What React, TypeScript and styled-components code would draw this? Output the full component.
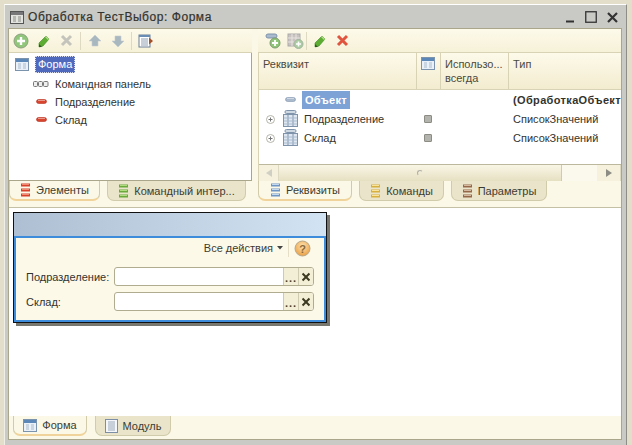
import React from "react";
import styled, { createGlobalStyle } from "styled-components";

const Global = createGlobalStyle`
  html, body { margin: 0; padding: 0; background: #e2dec9; }
  body { width: 632px; height: 445px; overflow: hidden; font-family: "Liberation Sans", Arial, sans-serif; font-size: 11px; color: #3c3c32; }
`;

const Page = styled.div`
  width: 632px; height: 445px; box-sizing: border-box; padding: 4px 5px 0 4px;
`;
const Win = styled.div`
  height: 441px; box-sizing: border-box; display: flex; flex-direction: column;
  background: #c9c9c5; border-top: 1px solid #fff; border-left: 1px solid #efefe8; border-right: 1px solid #8e8e86;
  padding: 0 4px 0 3px;
`;
const Title = styled.div`
  height: 23px; flex: none; display: flex; align-items: center; gap: 4px; padding: 1px 0 0 2px; box-sizing: border-box;
  font-size: 12px; color: #33332e; -webkit-text-stroke: 0.2px #33332e;
`;
const TitleText = styled.span`flex: 1; letter-spacing: 0.55px;`;
const WinButtons = styled.div`display: flex; align-items: center; gap: 10px; margin-right: 4px;`;
const Body = styled.div`
  height: 412px; flex: none; box-sizing: border-box; display: flex; flex-direction: column;
  background: #fbf8e7; border: 1px solid #a9a68c; border-bottom: none;
`;
const Top = styled.div`
  height: 172px; flex: none; display: grid; grid-template-columns: 243px 363px; column-gap: 6px;
`;
const Pane = styled.div`display: flex; flex-direction: column; min-width: 0;`;
const Toolbar = styled.div<{ $pad?: number }>`
  height: 24px; flex: none; box-sizing: border-box; display: flex; align-items: center; padding-left: ${p => p.$pad ?? 0}px;
  background: linear-gradient(#fdfaea, #f6f1d8); border-bottom: 1px solid #d8d3b4;
`;
const ToolBtn = styled.span`width: 23px; height: 18px; display: flex; align-items: center; justify-content: center;`;
const Sep = styled.span<{ $tight?: boolean }>`
  width: 1px; height: 18px; background: #dedac2; margin: ${p => (p.$tight ? "0 1px 0 -1px" : "0 2px")};
`;
const Tree = styled.div`
  flex: 1; background: #fff; border-right: 1px solid #a9a68c; border-bottom: 1px solid #a9a68c; padding-top: 2px; box-sizing: border-box;
`;
const TreeRoot = styled.div`
  height: 18px; display: flex; align-items: center; padding-left: 6px; margin-bottom: 2px; gap: 6px;
`;
const Selected = styled.span`
  height: 17px; line-height: 17px; padding: 0 3px; background: #4f69bd; color: #fff; outline: 1px dotted #d7dcf0; outline-offset: -1px;
`;
const TreeItem = styled.div`
  height: 18px; display: flex; align-items: center; padding-left: 23px; color: #33332e;
`;
const ItemIcon = styled.span`width: 18px; display: flex; align-items: center; justify-content: center; margin-right: 5px;`;
const Table = styled.div`
  flex: 1; display: flex; flex-direction: column; min-height: 0; background: #fff; overflow: hidden;
  border-left: 1px solid #d8d3b4;
`;
const Head = styled.div`
  height: 36px; flex: none; display: grid; grid-template-columns: 158px 24px 68px 1fr;
  background: linear-gradient(#fdfaea, #f3ecd0); border-bottom: 1px solid #d8d3b4; box-sizing: content-box;
`;
const HeadCell = styled.div<{ $last?: boolean }>`
  padding: 4px 0 0 4px; line-height: 14px; color: #4a4a3e; border-right: ${p => (p.$last ? "none" : "1px solid #d8d3b4")};
`;
const Row = styled.div`height: 19px; flex: none; display: grid; grid-template-columns: 158px 24px 68px 1fr; align-items: center; color: #33332e;`;
const NameCell = styled.div`display: flex; align-items: center; padding-left: 7px;`;
const Expand = styled.span<{ $hidden?: boolean }>`
  width: 9px; height: 9px; display: block; margin-right: 6px; visibility: ${p => (p.$hidden ? "hidden" : "visible")};
`;
const RowIcon = styled.span`width: 18px; display: flex; justify-content: center; margin-right: 5px;`;
const SelBold = styled.span`
  background: #7da2d6; color: #fff; font-weight: 700; height: 18px; line-height: 18px; padding: 0 3px; margin-left: -2px; letter-spacing: .3px;
`;
const Check = styled.span`
  display: block; width: 6px; height: 6px; margin-left: 7px; background: #b4b4ae; border: 1px solid #8c8c84; border-radius: 1px;
`;
const TypeCell = styled.div<{ $bold?: boolean }>`
  padding-left: 4px; white-space: nowrap; overflow: hidden; font-weight: ${p => (p.$bold ? 700 : 400)}; letter-spacing: ${p => (p.$bold ? ".35px" : "0")};
`;
const Spacer = styled.div`flex: 1;`;
const Scroll = styled.div`
  height: 17px; flex: none; display: grid; grid-template-columns: 20px 283px 35px 1fr; background: #f5f1dc; border-top: 1px solid #bcb89e; box-sizing: border-box;
`;
const ScrollArrow = styled.div`display: flex; align-items: center; justify-content: center; border-right: 1px solid #dedac2;`;
const Thumb = styled.div`
  background: linear-gradient(#f9f6e6, #e6e0c2); border-right: 1px solid #cfcbb0; display: flex; align-items: center; justify-content: center;
`;
const ThumbMark = styled.span`width: 4px; height: 4px; border: 1px solid #b0b0a8; border-radius: 50%; border-right-color: transparent; border-bottom-color: transparent;`;
const ScrollRest = styled.div`background: #fbf9ee;`;
const Tabs = styled.div`
  height: 20px; flex: none; display: flex; gap: 7px; box-sizing: border-box;
`;
const Tab = styled.div<{ $active?: boolean; $w: number }>`
  width: ${p => p.$w}px; height: 20px; box-sizing: border-box; display: flex; align-items: center; justify-content: center; gap: 5px;
  border-radius: 0 0 7px 7px; border: 1px solid #d0cbaa; border-top: none; color: #3c3c32;
  background: ${p => (p.$active ? "#fbf8e7" : "#e9e4ca")};
  ${p => p.$active && "border-bottom: 2px solid #f0d39a;"}
  white-space: nowrap;
`;
const Rule = styled.div`height: 7px; flex: none; border-bottom: 1px solid #c4c0a6; box-sizing: border-box;`;
const Canvas = styled.div`
  flex: 1; background: #fff; padding: 4px 0 0 4px; min-height: 0;
`;
const Form = styled.div`
  width: 314px; height: 111px; box-sizing: border-box; border: 1px solid #111; box-shadow: 3px 3px 0 #77776f;
  display: flex; flex-direction: column; background: #3d8bdb;
`;
const FormHead = styled.div`
  height: 23px; flex: none; background: linear-gradient(90deg, #aebfd3, #d2e3f3);
`;
const FormBody = styled.div`
  flex: 1; margin: 2px; background: #fcf9e9; display: flex; flex-direction: column; padding-right: 10px;
`;
const FormBar = styled.div`
  height: 20px; display: flex; align-items: center; justify-content: flex-end; margin-bottom: 9px; margin-right: 3px;
`;
const AllActions = styled.span`color: #3c3c32; display: flex; align-items: center; gap: 4px; padding-right: 5px; border-right: 1px solid #e4dfc6; height: 18px;`;
const Help = styled.span`margin-left: 5px; display: flex;`;
const Field = styled.div`height: 19px; display: flex; align-items: center; margin-bottom: 6px;`;
const Label = styled.span`width: 98px; flex: none; padding-left: 10px; box-sizing: border-box; white-space: nowrap; color: #33332e;`;
const Input = styled.div`
  flex: 1; height: 19px; box-sizing: border-box; background: #fff; border: 1px solid #b0ac90; border-radius: 3px;
  display: flex; justify-content: flex-end; overflow: hidden;
`;
const FieldBtn = styled.span`
  width: 15px; box-sizing: border-box; background: #f3eed6; border-left: 1px solid #cfcbb0; display: flex; align-items: flex-end; justify-content: center;
  color: #4a4526; font-weight: 700; font-size: 11px; line-height: 13px; letter-spacing: 1px;
`;
const FieldClear = styled(FieldBtn)`align-items: center;`;
const BottomTabs = styled.div`
  height: 20px; flex: none; display: flex; gap: 8px; padding-left: 4px; box-sizing: border-box;
`;
const Footer = styled.div`height: 3px; flex: none; background: #fbf8e7; border-bottom: 1px solid #a9a68c;`;

const Plus = () => (
  <svg width="16" height="16" viewBox="0 0 16 16"><circle cx="8" cy="8" r="7" fill="#8fc67a" stroke="#8f9f80" /><path d="M8 4v8M4 8h8" stroke="#fff" strokeWidth="2.4" /></svg>
);
const Pencil = () => (
  <svg width="14" height="14" viewBox="0 0 14 14"><path d="M9 2l3 3-6 7-4 1 0-4z" fill="#5cad32" stroke="#3d8a22" strokeWidth=".6" /><path d="M2 13l0-3 3 3z" fill="#2c5a18" /><path d="M9 2l3 3-1 1-3-3z" fill="#b6dc8e" /></svg>
);
const Cross = ({ c, s = 13, w = 3 }: { c: string; s?: number; w?: number }) => (
  <svg width={s} height={s} viewBox="0 0 13 13"><path d="M2 2l9 9M11 2l-9 9" stroke={c} strokeWidth={w} /></svg>
);
const Arrow = ({ up }: { up?: boolean }) => (
  <svg width="14" height="14" viewBox="0 0 14 14"><path d={up ? "M7 1l6 6H10v5H4V7H1z" : "M7 13l6-6H10V2H4v5H1z"} fill="#a9b7bf" stroke="#c6ced2" strokeWidth=".6" /></svg>
);
const ListArrow = () => (
  <svg width="16" height="14" viewBox="0 0 16 14"><rect x="1" y="1" width="11" height="12" fill="#fff" stroke="#6a7f98" /><rect x="1" y="1" width="11" height="2" fill="#6a8db5" /><path d="M3 5h7M3 7h7M3 9h7M3 11h7" stroke="#8f9eb0" /><path d="M11 3.5l4 3.5-4 3.5z" fill="#a4512a" /></svg>
);
const FormIcon = () => (
  <svg width="14" height="13" viewBox="0 0 14 13"><rect x=".5" y=".5" width="13" height="12" fill="#eaf0f7" stroke="#7c93ad" /><rect x="1" y="1" width="12" height="3" fill="#5b87b8" /><path d="M3 6h3M3 8h3M3 10h3M8 6h3M8 8h3M8 10h3" stroke="#a9bacd" /></svg>
);
const TitleIcon = () => (
  <svg width="14" height="13" viewBox="0 0 14 13"><rect x=".5" y=".5" width="13" height="12" fill="#e2e2de" stroke="#555" /><rect x="1" y="1" width="12" height="3" fill="#77777a" /><path d="M3 6h3M3 8h3M3 10h3M8 6h3M8 8h3M8 10h3" stroke="#8a8a88" /></svg>
);
const Module = () => (
  <svg width="13" height="14" viewBox="0 0 13 14"><rect x=".5" y=".5" width="12" height="13" fill="#f4f6f9" stroke="#7c8ea6" /><path d="M3 3h7M3 5h7M3 7h7M3 9h7M3 11h7" stroke="#9aa8ba" /></svg>
);
const Minus = ({ c = "#d8442e" }: { c?: string }) => (
  <svg width="11" height="6" viewBox="0 0 11 6"><rect x=".5" y=".5" width="10" height="4" rx="2" fill={c} stroke={c === "#d8442e" ? "#b8301e" : "#7f93ab"} strokeWidth=".6" /><rect x="2" y="1" width="7" height="1" fill="#ffffff" opacity=".45" /></svg>
);
const Panel = () => (
  <svg width="16" height="6" viewBox="0 0 16 6"><rect x=".5" y=".5" width="4" height="5" rx="1" fill="#eee" stroke="#777" /><rect x="5.5" y=".5" width="4" height="5" rx="1" fill="#eee" stroke="#777" /><rect x="10.5" y=".5" width="4.5" height="5" rx="1" fill="#eee" stroke="#777" /></svg>
);
const Stack = ({ c, d }: { c: string; d: string }) => (
  <svg width="11" height="14" viewBox="0 0 11 14"><path d="M1 2h9" stroke={d} strokeWidth="3" /><path d="M2 1.5h7" stroke={c} /><path d="M1 7h9" stroke={d} strokeWidth="3" /><path d="M2 6.5h7" stroke={c} /><path d="M1 12h9" stroke={d} strokeWidth="3" /><path d="M2 11.5h7" stroke={c} /></svg>
);
const ColTable = () => (
  <svg width="15" height="17" viewBox="0 0 15 17"><rect x="2" y=".5" width="11" height="3" rx="1.4" fill="#cfd9e3" stroke="#7f93ab" /><rect x=".5" y="4.5" width="14" height="12" fill="#dfe8f2" stroke="#7f93ab" /><path d="M5 5v11M10 5v11" stroke="#7f93ab" /><path d="M1 8h13M1 11h13M1 14h13" stroke="#a9bacd" /></svg>
);
const ExpandIcon = () => (
  <svg width="9" height="9" viewBox="0 0 9 9"><circle cx="4.5" cy="4.5" r="4" fill="#fff" stroke="#b4b4aa" /><path d="M2.5 4.5h4M4.5 2.5v4" stroke="#777" /></svg>
);
const AddAttr = () => (
  <svg width="16" height="16" viewBox="0 0 16 16"><rect x="1" y="1" width="11" height="4" rx="2" fill="#a9bacd" stroke="#7f93ab" /><circle cx="10" cy="10" r="5" fill="#8fc67a" stroke="#7d9b6d" /><path d="M10 7v6M7 10h6" stroke="#fff" strokeWidth="1.8" /></svg>
);
const AddCol = () => (
  <svg width="17" height="16" viewBox="0 0 17 16"><rect x="1" y="1" width="12" height="12" fill="#c8c2c0" stroke="#aaa" /><path d="M5 1v12M9 1v12M1 5h12M1 9h12" stroke="#e8e4e2" /><circle cx="11.5" cy="11" r="4.5" fill="#a9cda0" stroke="#a5b5a0" /><path d="M11.5 8.5v5M9 11h5" stroke="#fff" strokeWidth="1.6" /></svg>
);
const HelpIcon = () => (
  <svg width="17" height="17" viewBox="0 0 17 17">
    <defs><radialGradient id="h" cx=".5" cy=".35" r=".7"><stop offset="0" stopColor="#fde3b0" /><stop offset="1" stopColor="#e89a3c" /></radialGradient></defs>
    <circle cx="8.5" cy="8.5" r="7.5" fill="url(#h)" stroke="#b8a888" />
    <text x="8.5" y="12.5" textAnchor="middle" fontSize="11" fontWeight="700" fill="#8a6a3a" fontFamily="Liberation Sans">?</text>
  </svg>
);

export default function App() {
  return (
    <Page>
      <Global />
      <Win>
        <Title>
          <TitleIcon />
          <TitleText>Обработка ТестВыбор: Форма</TitleText>
          <WinButtons>
            <svg width="10" height="12" viewBox="0 0 10 12"><path d="M1 10.5h8" stroke="#333" strokeWidth="2" /></svg>
            <svg width="12" height="12" viewBox="0 0 12 12"><rect x=".75" y=".75" width="10.5" height="10.5" fill="none" stroke="#333" strokeWidth="1.3" /></svg>
            <svg width="11" height="11" viewBox="0 0 11 11"><path d="M1 1l9 9M10 1l-9 9" stroke="#333" strokeWidth="2.2" /></svg>
          </WinButtons>
        </Title>
        <Body>
          <Top>
            <Pane>
              <Toolbar>
                <ToolBtn><Plus /></ToolBtn>
                <ToolBtn><Pencil /></ToolBtn>
                <ToolBtn><Cross c="#c4c4bc" /></ToolBtn>
                <Sep />
                <ToolBtn><Arrow up /></ToolBtn>
                <ToolBtn><Arrow /></ToolBtn>
                <Sep />
                <ToolBtn><ListArrow /></ToolBtn>
              </Toolbar>
              <Tree>
                <TreeRoot><FormIcon /><Selected>Форма</Selected></TreeRoot>
                <TreeItem><ItemIcon><Panel /></ItemIcon>Командная панель</TreeItem>
                <TreeItem><ItemIcon><Minus /></ItemIcon>Подразделение</TreeItem>
                <TreeItem><ItemIcon><Minus /></ItemIcon>Склад</TreeItem>
              </Tree>
              <Tabs>
                <Tab $active $w={91}><Stack c="#f08a70" d="#d8402c" />Элементы</Tab>
                <Tab $w={139}><Stack c="#b0dc80" d="#6aa83c" />Командный интер...</Tab>
              </Tabs>
            </Pane>
            <Pane>
              <Toolbar $pad={3}>
                <ToolBtn><AddAttr /></ToolBtn>
                <ToolBtn><AddCol /></ToolBtn>
                <Sep $tight />
                <ToolBtn><Pencil /></ToolBtn>
                <ToolBtn><Cross c="#e0553f" /></ToolBtn>
              </Toolbar>
              <Table>
                <Head>
                  <HeadCell>Реквизит</HeadCell>
                  <HeadCell><FormIcon /></HeadCell>
                  <HeadCell>Использо...<br />всегда</HeadCell>
                  <HeadCell $last>Тип</HeadCell>
                </Head>
                <Row>
                  <NameCell><Expand $hidden /><RowIcon><Minus c="#a9bacd" /></RowIcon><SelBold>Объект</SelBold></NameCell>
                  <div /><div />
                  <TypeCell $bold>(ОбработкаОбъект</TypeCell>
                </Row>
                <Row>
                  <NameCell><Expand><ExpandIcon /></Expand><RowIcon><ColTable /></RowIcon>Подразделение</NameCell>
                  <div><Check /></div><div />
                  <TypeCell>СписокЗначений</TypeCell>
                </Row>
                <Row>
                  <NameCell><Expand><ExpandIcon /></Expand><RowIcon><ColTable /></RowIcon>Склад</NameCell>
                  <div><Check /></div><div />
                  <TypeCell>СписокЗначений</TypeCell>
                </Row>
                <Spacer />
                <Scroll>
                  <ScrollArrow><svg width="8" height="8" viewBox="0 0 8 8"><path d="M7 0v8L1 4z" fill="#d0cfc4" /></svg></ScrollArrow>
                  <Thumb><ThumbMark /></Thumb>
                  <ScrollRest />
                  <ScrollArrow><svg width="8" height="8" viewBox="0 0 8 8"><path d="M1 0v8l6-4z" fill="#8c8c84" /></svg></ScrollArrow>
                </Scroll>
              </Table>
              <Tabs>
                <Tab $active $w={94}><Stack c="#c4d8ee" d="#6f96c4" />Реквизиты</Tab>
                <Tab $w={85}><Stack c="#f8e49a" d="#d8b040" />Команды</Tab>
                <Tab $w={96}><Stack c="#d4b8a0" d="#96684a" />Параметры</Tab>
              </Tabs>
            </Pane>
          </Top>
          <Rule />
          <Canvas>
            <Form>
              <FormHead />
              <FormBody>
                <FormBar>
                  <AllActions>Все действия
                    <svg width="6" height="4" viewBox="0 0 6 4"><path d="M0 0h6L3 3.5z" fill="#444" /></svg>
                  </AllActions>
                  <Help><HelpIcon /></Help>
                </FormBar>
                <Field>
                  <Label>Подразделение:</Label>
                  <Input><FieldBtn>...</FieldBtn><FieldClear><Cross c="#3c3a20" s={10} w={2.6} /></FieldClear></Input>
                </Field>
                <Field>
                  <Label>Склад:</Label>
                  <Input><FieldBtn>...</FieldBtn><FieldClear><Cross c="#3c3a20" s={10} w={2.6} /></FieldClear></Input>
                </Field>
              </FormBody>
            </Form>
          </Canvas>
          <BottomTabs>
            <Tab $active $w={74}><FormIcon />Форма</Tab>
            <Tab $w={76}><Module />Модуль</Tab>
          </BottomTabs>
          <Footer />
        </Body>
      </Win>
    </Page>
  );
}
